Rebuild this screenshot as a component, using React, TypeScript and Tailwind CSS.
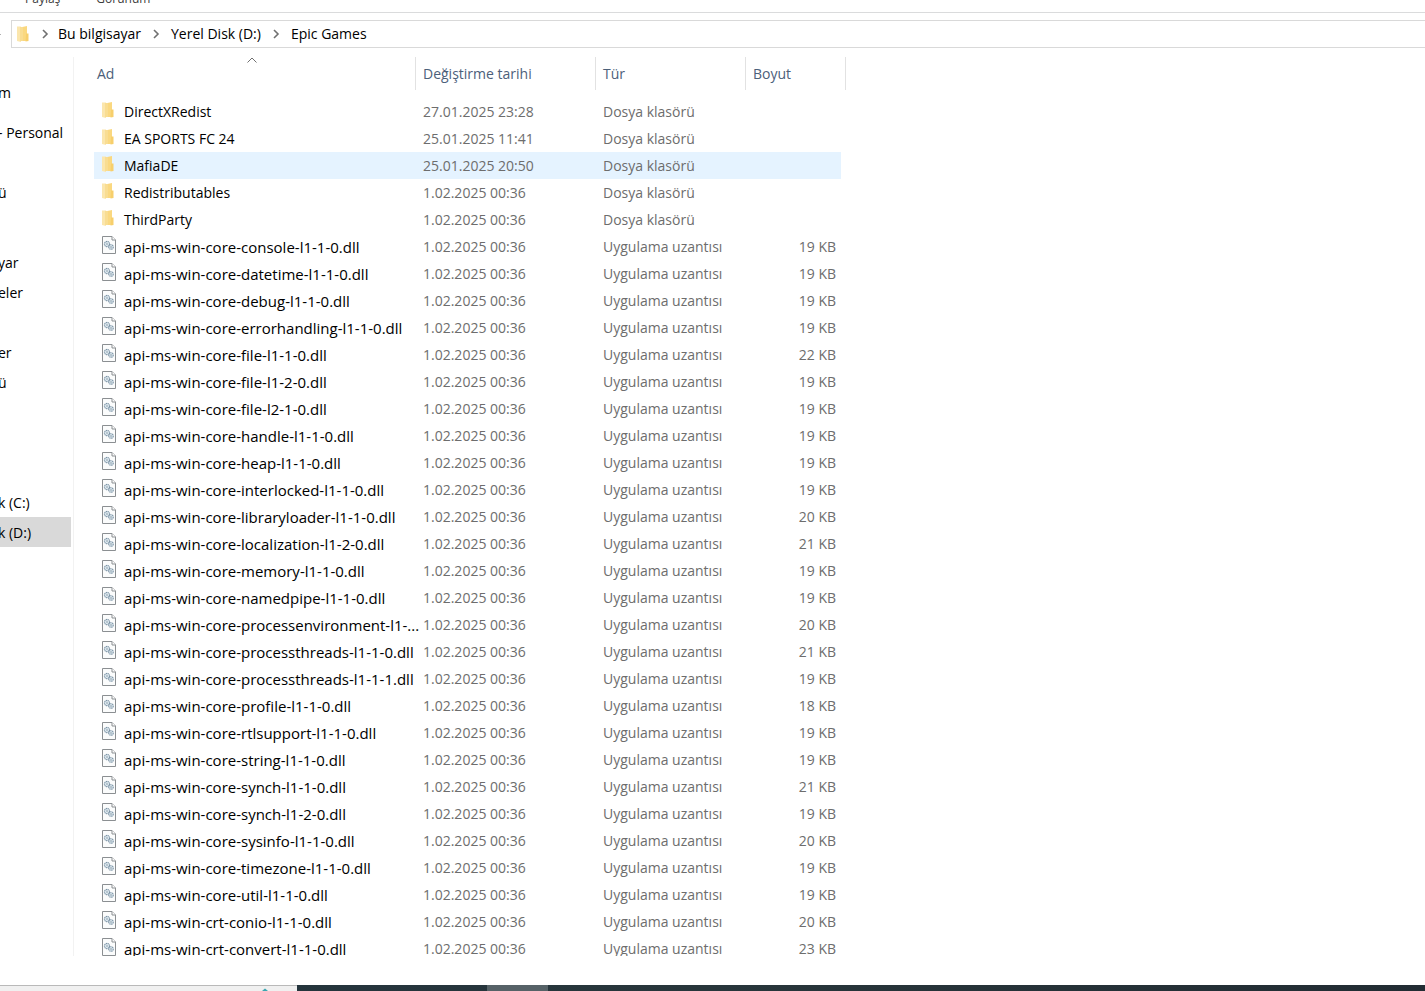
import { Fragment } from "react";

interface FileRow {
  name: string;
  date: string;
  kind: "folder" | "dll";
  size?: string;
}

interface SideItem {
  label: string;
  active?: boolean;
}

const BUILD_DATE = "1.02.2025 00:36";

const FOLDERS: [string, string][] = [
  ["DirectXRedist", "27.01.2025 23:28"],
  ["EA SPORTS FC 24", "25.01.2025 11:41"],
  ["MafiaDE", "25.01.2025 20:50"],
  ["Redistributables", BUILD_DATE],
  ["ThirdParty", BUILD_DATE],
];

const DLLS: [string, number][] = [
  ["api-ms-win-core-console-l1-1-0.dll", 19],
  ["api-ms-win-core-datetime-l1-1-0.dll", 19],
  ["api-ms-win-core-debug-l1-1-0.dll", 19],
  ["api-ms-win-core-errorhandling-l1-1-0.dll", 19],
  ["api-ms-win-core-file-l1-1-0.dll", 22],
  ["api-ms-win-core-file-l1-2-0.dll", 19],
  ["api-ms-win-core-file-l2-1-0.dll", 19],
  ["api-ms-win-core-handle-l1-1-0.dll", 19],
  ["api-ms-win-core-heap-l1-1-0.dll", 19],
  ["api-ms-win-core-interlocked-l1-1-0.dll", 19],
  ["api-ms-win-core-libraryloader-l1-1-0.dll", 20],
  ["api-ms-win-core-localization-l1-2-0.dll", 21],
  ["api-ms-win-core-memory-l1-1-0.dll", 19],
  ["api-ms-win-core-namedpipe-l1-1-0.dll", 19],
  ["api-ms-win-core-processenvironment-l1-...", 20],
  ["api-ms-win-core-processthreads-l1-1-0.dll", 21],
  ["api-ms-win-core-processthreads-l1-1-1.dll", 19],
  ["api-ms-win-core-profile-l1-1-0.dll", 18],
  ["api-ms-win-core-rtlsupport-l1-1-0.dll", 19],
  ["api-ms-win-core-string-l1-1-0.dll", 19],
  ["api-ms-win-core-synch-l1-1-0.dll", 21],
  ["api-ms-win-core-synch-l1-2-0.dll", 19],
  ["api-ms-win-core-sysinfo-l1-1-0.dll", 20],
  ["api-ms-win-core-timezone-l1-1-0.dll", 19],
  ["api-ms-win-core-util-l1-1-0.dll", 19],
  ["api-ms-win-crt-conio-l1-1-0.dll", 20],
  ["api-ms-win-crt-convert-l1-1-0.dll", 23],
];

const ROWS: FileRow[] = [
  ...FOLDERS.map(([name, date]) => ({ name, date, kind: "folder" as const })),
  ...DLLS.map(([name, kb]) => ({ name, date: BUILD_DATE, kind: "dll" as const, size: `${kb} KB` })),
];

const HOVERED = "MafiaDE";

const SIDE_GROUPS: { gap: string; items: SideItem[] }[] = [
  { gap: "mt-5", items: [{ label: "m" }] },
  { gap: "mt-2.5", items: [{ label: "- Personal" }] },
  { gap: "mt-[30px]", items: [{ label: "ü" }] },
  { gap: "mt-10", items: [{ label: "yar" }, { label: "eler" }] },
  { gap: "mt-[30px]", items: [{ label: "er" }, { label: "ü" }] },
  { gap: "mt-[90px]", items: [{ label: "k (C:)" }, { label: "k (D:)", active: true }] },
];

const CRUMBS = ["Bu bilgisayar", "Yerel Disk (D:)", "Epic Games"];

function FolderIcon() {
  return (
    <svg width="16" height="18" viewBox="0 0 16 18" className="shrink-0" aria-hidden="true">
      <path d="M1 1.500h4v15.500l-4-1z" fill="#fbe6ad" />
      <path d="M4 2.500l7-1.500v15H4z" fill="#fad880" />
      <path d="M4 2.500l3-.6V16H4z" fill="#f9dd92" />
      <path d="M10 8.500h2.500V16l-3 .5z" fill="#f7cf6c" />
    </svg>
  );
}

function Gear({ cx, cy, r }: { cx: number; cy: number; r: number }) {
  return (
    <>
      <circle cx={cx} cy={cy} r={r} fill="#e6f0f6" stroke="#7b93a5" strokeWidth="1.1" strokeDasharray="1.3 0.5" />
      <circle cx={cx} cy={cy} r="0.9" fill="#fff" stroke="#7b93a5" strokeWidth="0.6" />
    </>
  );
}

function DllIcon() {
  return (
    <svg width="16" height="18" viewBox="0 0 16 18" className="shrink-0" aria-hidden="true">
      <path d="M1.5.5h9.500l3.500 3.500v13.500h-13z" fill="#fbfcfc" stroke="#8b8f92" />
      <path d="M11 .5V4h3.500" fill="#fff" stroke="#8b8f92" />
      <Gear cx={6} cy={8} r={2.6} />
      <Gear cx={10} cy={11} r={2.3} />
    </svg>
  );
}

function Chevron() {
  return (
    <svg width="8" height="10" viewBox="0 0 8 10" className="shrink-0" aria-hidden="true">
      <path d="M2 1l4 4-4 4" fill="none" stroke="#707070" strokeWidth="1.6" />
    </svg>
  );
}

function Ribbon() {
  return (
    <div className="flex h-[13px] items-end gap-9 overflow-hidden border-b border-[#dadbdc] pb-[3px] pl-[25px] text-[12px] leading-5 text-[#3c3c3c]">
      <button type="button">Paylaş</button>
      <button type="button">Görünüm</button>
    </div>
  );
}

function AddressBar() {
  return (
    <div className="flex h-11 pt-[7px] pb-[9px]">
      <div className="flex w-[11px] items-center overflow-hidden">
        <span className="h-px w-px bg-[#b0b0b0]" />
      </div>
      <nav
        aria-label="Adres"
        className="flex flex-1 items-center border border-r-0 border-[#d9d9d9] pl-1"
      >
        <FolderIcon />
        {CRUMBS.map((crumb, i) => (
          <Fragment key={crumb}>
            <span className={i === 0 ? "px-[9px]" : "px-[11px]"}>
              <Chevron />
            </span>
            <a href="#" className="whitespace-nowrap text-black">
              {crumb}
            </a>
          </Fragment>
        ))}
      </nav>
    </div>
  );
}

function Sidebar() {
  return (
    <nav aria-label="Gezinti" className="w-[74px] shrink-0 overflow-hidden border-r border-[#f2f2f2] pr-0.5">
      {SIDE_GROUPS.map((group, i) => (
        <ul key={i} className={`-ml-0.5 ${group.gap}`}>
          {group.items.map((item) => (
            <li key={item.label}>
              <a
                href="#"
                className={`flex h-[30px] items-center pt-0.5 whitespace-nowrap text-black ${item.active ? "bg-[#d9d9d9]" : ""}`}
              >
                {item.label}
              </a>
            </li>
          ))}
        </ul>
      ))}
    </nav>
  );
}

function HeaderCell({ label, sorted = false }: { label: string; sorted?: boolean }) {
  return (
    <th scope="col" aria-sort={sorted ? "ascending" : undefined} className="h-[41px] p-0 text-left align-top font-normal">
      <button
        type="button"
        className={`relative flex h-[33px] w-full items-center border-r border-[#e2e2e2] text-[#4c607a] ${sorted ? "pl-[3px]" : "pl-[7px]"}`}
      >
        {label}
        {sorted && (
          <svg width="10" height="6" viewBox="0 0 10 6" className="absolute top-0 left-[153px]" aria-hidden="true">
            <path d="M.5 5.500L5 1l4.500 4.500" fill="none" stroke="#707070" />
          </svg>
        )}
      </button>
    </th>
  );
}

function FileTable() {
  return (
    <table className="w-[752px] table-fixed border-collapse">
      <colgroup>
        <col className="w-[322px]" />
        <col className="w-[180px]" />
        <col className="w-[150px]" />
        <col className="w-[100px]" />
      </colgroup>
      <thead>
        <tr>
          <HeaderCell label="Ad" sorted />
          <HeaderCell label="Değiştirme tarihi" />
          <HeaderCell label="Tür" />
          <HeaderCell label="Boyut" />
        </tr>
      </thead>
      <tbody className="text-[#6d6d6d]">
        {ROWS.map((row) => {
          const bg = row.name === HOVERED ? "bg-[#e5f3ff]" : "";
          const isFolder = row.kind === "folder";
          return (
            <tr key={row.name} className="h-[27px] whitespace-nowrap">
              <td className={`p-0 ${bg}`}>
                <div className="flex items-center gap-[7px] pl-[7px] text-black">
                  <div className="pb-1">{isFolder ? <FolderIcon /> : <DllIcon />}</div>
                  <span className={isFolder ? "" : "text-[15px]"}>{row.name}</span>
                </div>
              </td>
              <td className={`p-0 pl-[7px] ${bg}`}>{row.date}</td>
              <td className={`p-0 pl-[7px] ${bg}`}>{isFolder ? "Dosya klasörü" : "Uygulama uzantısı"}</td>
              <td className="p-0 pr-[5px]">
                <div className={`h-[27px] pr-[5px] text-right leading-[27px] ${bg}`}>{row.size}</div>
              </td>
            </tr>
          );
        })}
      </tbody>
    </table>
  );
}

function Taskbar() {
  return (
    <footer className="flex h-1.5 shrink-0 bg-linear-to-r from-[#22333d] via-[#28363b] to-[#222c33]">
      <div className="flex w-[297px] justify-end border-t border-[#b9b9b9] bg-[#f0f0f0] pr-7">
        <svg width="8" height="5" viewBox="0 0 8 5" aria-hidden="true">
          <path d="M1 5l3-2.500L7 5z" fill="#3aa6b0" />
        </svg>
      </div>
      <div className="ml-[190px] w-[61px] bg-[#566267]" />
    </footer>
  );
}

export default function App() {
  return (
    <div className="flex h-screen flex-col overflow-hidden bg-white font-['Open_Sans',sans-serif] text-[14px] leading-5">
      <Ribbon />
      <AddressBar />
      <div className="flex min-h-0 flex-1">
        <Sidebar />
        <main className="min-w-0 flex-1 overflow-hidden pl-5">
          <FileTable />
        </main>
      </div>
      <div className="h-[29px] shrink-0" />
      <Taskbar />
    </div>
  );
}
